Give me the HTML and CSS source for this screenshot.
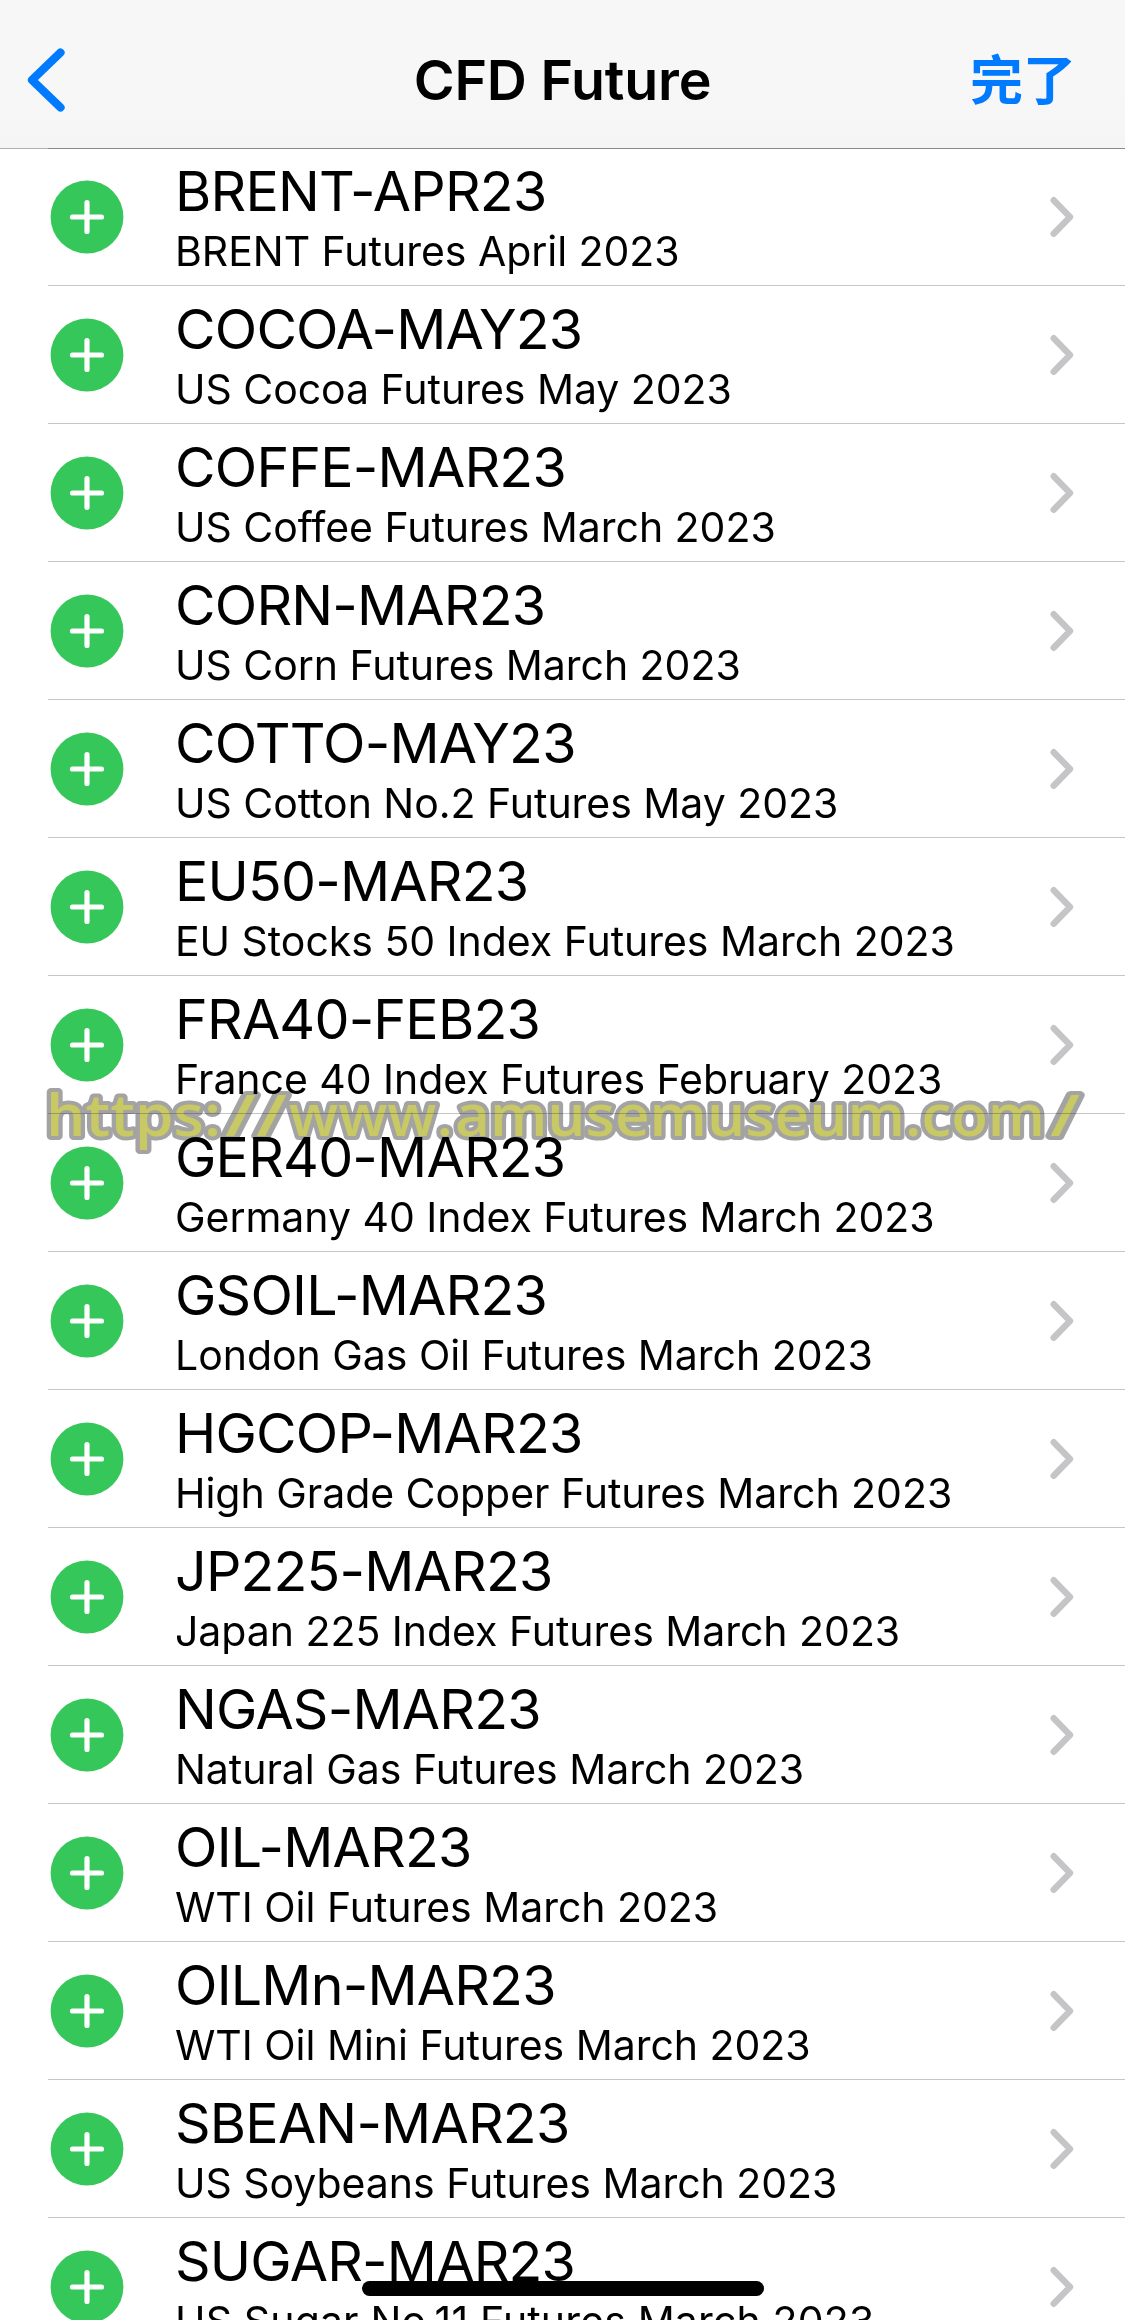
FILE: index.html
```html
<!DOCTYPE html>
<html lang="zh">
<head>
    <meta charset="UTF-8">
    <meta name="viewport" content="width=device-width, initial-scale=1.0">
    <title>CFD Future</title>
    <link rel="stylesheet" href="styles.css">
</head>
<body>
    <!-- Shared icons -->
    <svg class="sprite">
        <symbol id="add" viewBox="0 0 74 74">
            <circle cx="37" cy="37" r="36.4" fill="#35c759"/>
            <path d="M22.5 37h29M37 22.5v29" fill="none" stroke="#fff" stroke-width="5.2" stroke-linecap="round"/>
        </symbol>
        <symbol id="chevron" viewBox="0 0 24 42">
            <path d="M3.7 4.2L20 21L3.7 37.8" fill="none" stroke="#c5c5c7" stroke-width="6.4" stroke-linecap="round" stroke-linejoin="round"/>
        </symbol>
    </svg>

    <header class="navbar">
        <a class="back" href="#" aria-label="Back">
            <svg width="40" height="66" viewBox="0 0 40 66"><path d="M34.5 5.5L6 33L34.5 60.5" fill="none" stroke="#007aff" stroke-width="8.2" stroke-linecap="round" stroke-linejoin="round"/></svg>
        </a>
        <h1 class="title">CFD Future</h1>
        <a class="done" href="#">完了</a>
    </header>

    <ul class="list">
        <li class="row">
            <svg class="add"><use href="#add"/></svg>
            <div class="info"><div class="symbol">BRENT-APR23</div><div class="desc">BRENT Futures April 2023</div></div>
            <svg class="chevron"><use href="#chevron"/></svg>
        </li>
        <li class="row">
            <svg class="add"><use href="#add"/></svg>
            <div class="info"><div class="symbol">COCOA-MAY23</div><div class="desc">US Cocoa Futures May 2023</div></div>
            <svg class="chevron"><use href="#chevron"/></svg>
        </li>
        <li class="row">
            <svg class="add"><use href="#add"/></svg>
            <div class="info"><div class="symbol">COFFE-MAR23</div><div class="desc">US Coffee Futures March 2023</div></div>
            <svg class="chevron"><use href="#chevron"/></svg>
        </li>
        <li class="row">
            <svg class="add"><use href="#add"/></svg>
            <div class="info"><div class="symbol">CORN-MAR23</div><div class="desc">US Corn Futures March 2023</div></div>
            <svg class="chevron"><use href="#chevron"/></svg>
        </li>
        <li class="row">
            <svg class="add"><use href="#add"/></svg>
            <div class="info"><div class="symbol">COTTO-MAY23</div><div class="desc">US Cotton No.2 Futures May 2023</div></div>
            <svg class="chevron"><use href="#chevron"/></svg>
        </li>
        <li class="row">
            <svg class="add"><use href="#add"/></svg>
            <div class="info"><div class="symbol">EU50-MAR23</div><div class="desc">EU Stocks 50 Index Futures March 2023</div></div>
            <svg class="chevron"><use href="#chevron"/></svg>
        </li>
        <li class="row">
            <svg class="add"><use href="#add"/></svg>
            <div class="info"><div class="symbol">FRA40-FEB23</div><div class="desc">France 40 Index Futures February 2023</div></div>
            <svg class="chevron"><use href="#chevron"/></svg>
        </li>
        <li class="row">
            <svg class="add"><use href="#add"/></svg>
            <div class="info"><div class="symbol">GER40-MAR23</div><div class="desc">Germany 40 Index Futures March 2023</div></div>
            <svg class="chevron"><use href="#chevron"/></svg>
        </li>
        <li class="row">
            <svg class="add"><use href="#add"/></svg>
            <div class="info"><div class="symbol">GSOIL-MAR23</div><div class="desc">London Gas Oil Futures March 2023</div></div>
            <svg class="chevron"><use href="#chevron"/></svg>
        </li>
        <li class="row">
            <svg class="add"><use href="#add"/></svg>
            <div class="info"><div class="symbol">HGCOP-MAR23</div><div class="desc">High Grade Copper Futures March 2023</div></div>
            <svg class="chevron"><use href="#chevron"/></svg>
        </li>
        <li class="row">
            <svg class="add"><use href="#add"/></svg>
            <div class="info"><div class="symbol">JP225-MAR23</div><div class="desc">Japan 225 Index Futures March 2023</div></div>
            <svg class="chevron"><use href="#chevron"/></svg>
        </li>
        <li class="row">
            <svg class="add"><use href="#add"/></svg>
            <div class="info"><div class="symbol">NGAS-MAR23</div><div class="desc">Natural Gas Futures March 2023</div></div>
            <svg class="chevron"><use href="#chevron"/></svg>
        </li>
        <li class="row">
            <svg class="add"><use href="#add"/></svg>
            <div class="info"><div class="symbol">OIL-MAR23</div><div class="desc">WTI Oil Futures March 2023</div></div>
            <svg class="chevron"><use href="#chevron"/></svg>
        </li>
        <li class="row">
            <svg class="add"><use href="#add"/></svg>
            <div class="info"><div class="symbol">OILMn-MAR23</div><div class="desc">WTI Oil Mini Futures March 2023</div></div>
            <svg class="chevron"><use href="#chevron"/></svg>
        </li>
        <li class="row">
            <svg class="add"><use href="#add"/></svg>
            <div class="info"><div class="symbol">SBEAN-MAR23</div><div class="desc">US Soybeans Futures March 2023</div></div>
            <svg class="chevron"><use href="#chevron"/></svg>
        </li>
        <li class="row">
            <svg class="add"><use href="#add"/></svg>
            <div class="info"><div class="symbol">SUGAR-MAR23</div><div class="desc desc-wide">US Sugar No.11 Futures March 2023</div></div>
            <svg class="chevron"><use href="#chevron"/></svg>
        </li>
    </ul>

    <svg class="watermark" viewBox="0 0 1125 100">
        <text y="66"><tspan x="46" textLength="175" lengthAdjust="spacingAndGlyphs">https:</tspan><tspan x="225" textLength="62" lengthAdjust="spacingAndGlyphs">//</tspan><tspan x="289" textLength="164" lengthAdjust="spacingAndGlyphs">www.</tspan><tspan x="455" textLength="450" lengthAdjust="spacingAndGlyphs">amusemuseum</tspan><tspan x="905" textLength="140" lengthAdjust="spacingAndGlyphs">.com</tspan><tspan x="1050" textLength="30" lengthAdjust="spacingAndGlyphs">/</tspan></text>
    </svg>
    <div class="home-indicator"></div>
</body>
</html>
```

FILE: styles.css
```css
* {
    margin: 0;
    padding: 0;
    box-sizing: border-box;
}

body {
    position: relative;
    height: 2320px;
    overflow: hidden;
    background-color: #fff;
    color: #000;
    font-family: Inter, "Liberation Sans", "Noto Sans CJK JP", sans-serif;
}

.sprite {
    display: none;
}

/* Navigation bar */
.navbar {
    display: grid;
    grid-template-columns: 1fr auto 1fr;
    align-items: center;
    height: 149px;
    padding: 12px 49px 0 26px;
    background: linear-gradient(#f7f7f7 60%, #f5f5f5);
    border-bottom: 1px solid #b0b0b0;
}

.back svg {
    display: block;
}

.title {
    margin-bottom: 2px;
    padding-left: 23px;
    font-size: 55.5px;
    font-weight: 600;
    letter-spacing: -0.2px;
}

.done {
    justify-self: end;
    margin-bottom: 7px;
    color: #007aff;
    font-family: "Noto Sans CJK JP", sans-serif;
    font-size: 53px;
    font-weight: 700;
    line-height: 60px;
    text-decoration: none;
}

/* Symbol list */
.list {
    margin: -1px 0 0 48px;
    list-style: none;
    border-top: 1px solid #8a8a8d;
}

.row {
    display: flex;
    align-items: center;
    height: 138px;
    padding: 0 51px 0 2px;
    border-bottom: 1px solid #c6c6c8;
}

.row:first-child {
    height: 137px;
}

.add {
    flex: none;
    width: 74px;
    height: 74px;
}

.info {
    flex: 1;
    padding: 2px 0 0 51px;
    white-space: nowrap;
}

.symbol {
    font-size: 55.5px;
    line-height: 66px;
    letter-spacing: -0.8px;
}

.desc {
    font-size: 41px;
    line-height: 54px;
    letter-spacing: -0.03px;
}

.desc-wide {
    letter-spacing: 0.15px;
}

.chevron {
    flex: none;
    width: 24px;
    height: 42px;
}

/* Overlays */
.watermark {
    position: absolute;
    top: 1070px;
    left: 0;
    width: 1125px;
    height: 100px;
    mix-blend-mode: multiply;
}

.watermark text {
    font-family: "Open Sans", sans-serif;
    font-size: 57px;
    font-weight: 600;
    fill: #c8c864;
    stroke: #a3a3a3;
    stroke-width: 8px;
    stroke-linejoin: round;
    paint-order: stroke;
}

.home-indicator {
    position: absolute;
    top: 2281px;
    left: 362px;
    width: 402px;
    height: 15px;
    border-radius: 8px;
    background-color: #000;
}
```
